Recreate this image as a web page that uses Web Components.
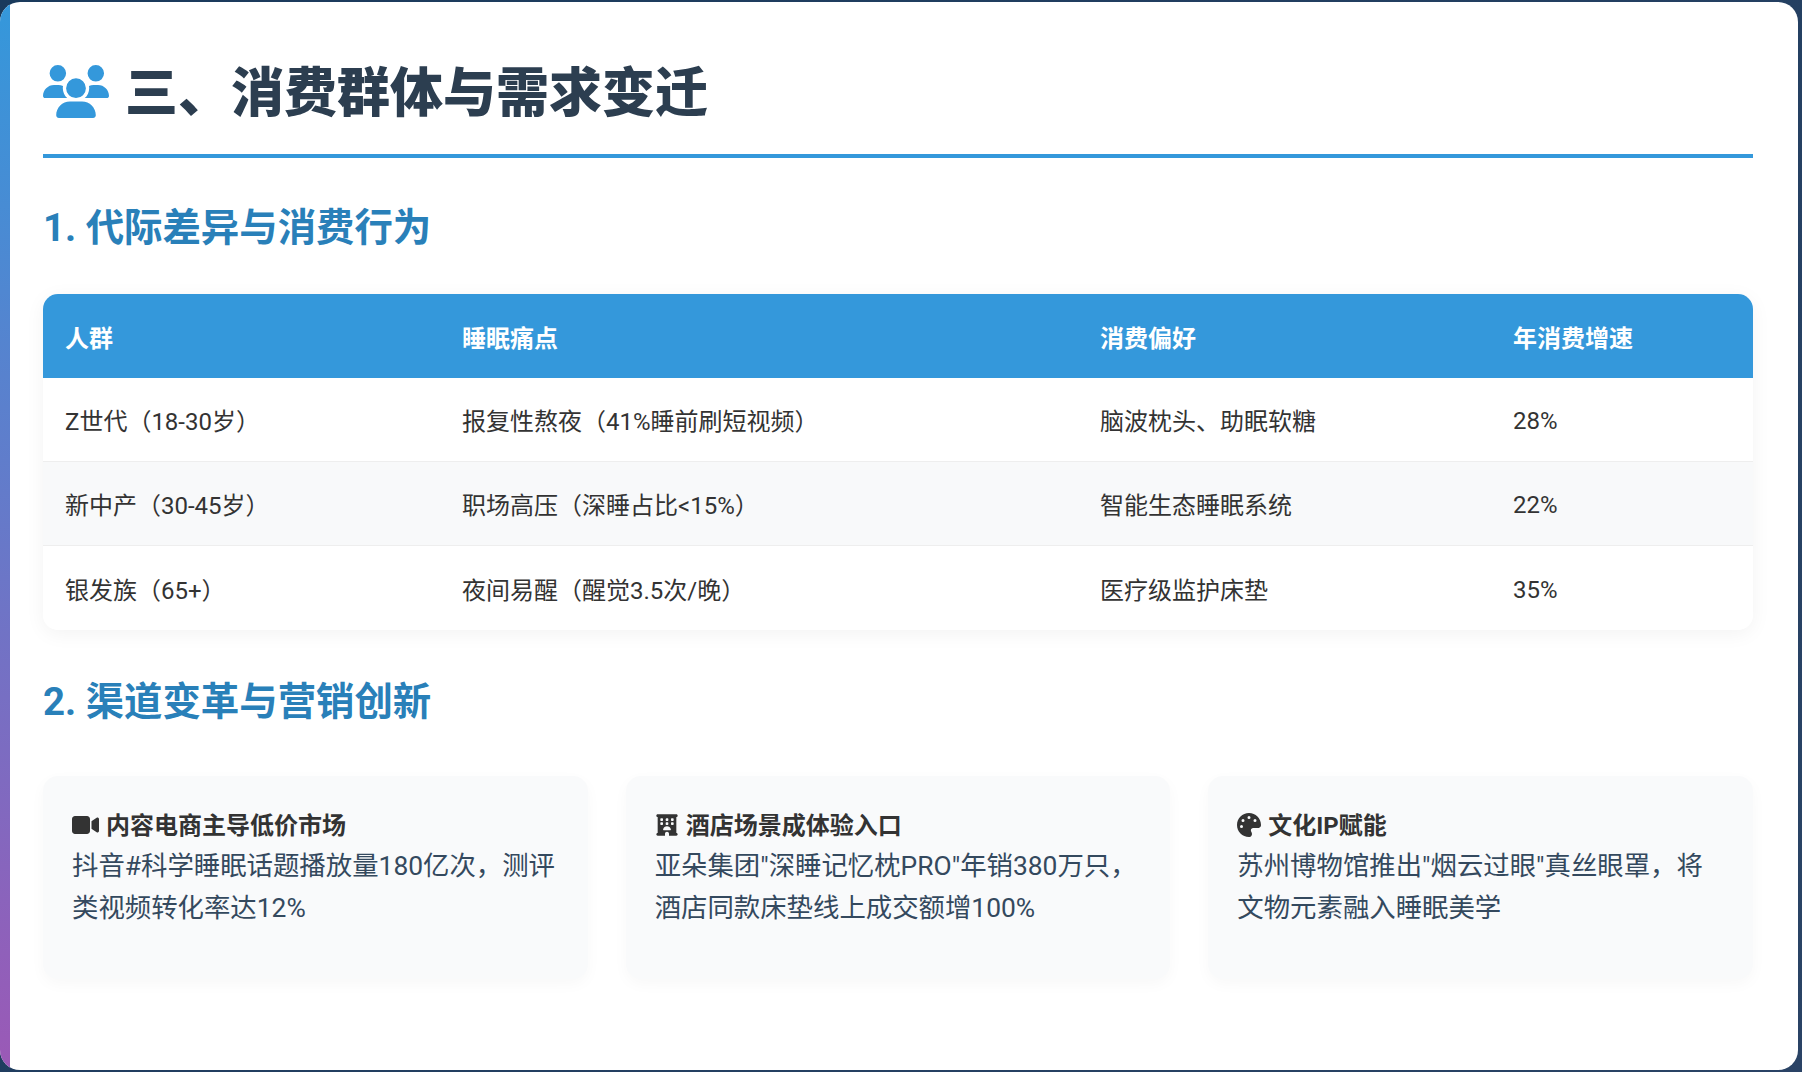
<!DOCTYPE html>
<html lang="zh-CN">
  <head>
    <meta charset="UTF-8" />
    <title>三、消费群体与需求变迁</title>
    <style>
      html, body { margin: 0; height: 100%; }
      body {
        background: linear-gradient(135deg, #1a3a5c, #2a4365);
        font-family: "Roboto", "Noto Sans CJK SC", sans-serif;
      }
    </style>
  </head>
  <body>
    <slide-page>
      <page-title>
        <svg slot="icon" viewBox="0 0 640 512"><path d="M144 0a80 80 0 1 1 0 160A80 80 0 1 1 144 0zM512 0a80 80 0 1 1 0 160A80 80 0 1 1 512 0zM0 298.7C0 239.8 47.8 192 106.7 192h42.7c15.9 0 31 3.5 44.6 9.7c-1.3 7.2-1.9 14.7-1.9 22.3c0 38.2 16.8 72.5 43.3 96c-.2 0-.4 0-.7 0H21.3C9.6 320 0 310.4 0 298.7zM405.3 320c-.2 0-.4 0-.7 0c26.6-23.5 43.3-57.8 43.3-96c0-7.6-.7-15-1.9-22.3c13.6-6.3 28.7-9.7 44.6-9.7h42.7C592.2 192 640 239.8 640 298.7c0 11.8-9.6 21.3-21.3 21.3H405.3zM224 224a96 96 0 1 1 192 0 96 96 0 1 1 -192 0zM128 485.3C128 411.7 187.7 352 261.3 352H378.7C452.3 352 512 411.7 512 485.3c0 14.7-11.9 26.7-26.7 26.7H154.7c-14.7 0-26.7-11.9-26.7-26.7z"/></svg>
        三、消费群体与需求变迁
      </page-title>

      <section-heading>1. 代际差异与消费行为</section-heading>

      <data-table>
        <data-row head><span>人群</span><span>睡眠痛点</span><span>消费偏好</span><span>年消费增速</span></data-row>
        <data-row><span>Z世代（18-30岁）</span><span>报复性熬夜（41%睡前刷短视频）</span><span>脑波枕头、助眠软糖</span><span>28%</span></data-row>
        <data-row even><span>新中产（30-45岁）</span><span>职场高压（深睡占比&lt;15%）</span><span>智能生态睡眠系统</span><span>22%</span></data-row>
        <data-row last><span>银发族（65+）</span><span>夜间易醒（醒觉3.5次/晚）</span><span>医疗级监护床垫</span><span>35%</span></data-row>
      </data-table>

      <section-heading>2. 渠道变革与营销创新</section-heading>

      <card-grid>
        <info-card>
          <svg slot="icon" viewBox="0 0 576 512" width="27" height="24"><path d="M0 128C0 92.7 28.7 64 64 64H320c35.3 0 64 28.7 64 64V384c0 35.3-28.7 64-64 64H64c-35.3 0-64-28.7-64-64V128zM559.1 99.8c10.4 5.6 16.9 16.4 16.9 28.2V384c0 11.8-6.5 22.6-16.9 28.2s-23 5-32.9-1.6l-96-64L416 337.1V320 192 174.9l14.2-9.5 96-64c9.8-6.5 22.4-7.2 32.9-1.6z"/></svg>
          <span slot="title">内容电商主导低价市场</span>
          抖音#科学睡眠话题播放量180亿次，测评类视频转化率达12%
        </info-card>
        <info-card>
          <svg slot="icon" viewBox="-32 -32 576 576" width="24" height="24"><path d="M0 32C0 14.3 14.3 0 32 0H480c17.7 0 32 14.3 32 32s-14.3 32-32 32V448c17.7 0 32 14.3 32 32s-14.3 32-32 32H304V464c0-26.5-21.5-48-48-48s-48 21.5-48 48v48H32c-17.7 0-32-14.3-32-32s14.3-32 32-32V64C14.3 64 0 49.7 0 32zm96 80v32c0 8.8 7.2 16 16 16h32c8.8 0 16-7.2 16-16V112c0-8.8-7.2-16-16-16H112c-8.8 0-16 7.2-16 16zM240 96c-8.8 0-16 7.2-16 16v32c0 8.8 7.2 16 16 16h32c8.8 0 16-7.2 16-16V112c0-8.8-7.2-16-16-16H240c-8.8 0-16 7.2-16 16zm112 16v32c0 8.8 7.2 16 16 16h32c8.8 0 16-7.2 16-16V112c0-8.8-7.2-16-16-16H368c-8.8 0-16 7.2-16 16zM112 192c-8.8 0-16 7.2-16 16v32c0 8.8 7.2 16 16 16h32c8.8 0 16-7.2 16-16V208c0-8.8-7.2-16-16-16H112zm112 16v32c0 8.8 7.2 16 16 16h32c8.8 0 16-7.2 16-16V208c0-8.8-7.2-16-16-16H240c-8.8 0-16 7.2-16 16zm144-16c-8.8 0-16 7.2-16 16v32c0 8.8 7.2 16 16 16h32c8.8 0 16-7.2 16-16V208c0-8.8-7.2-16-16-16H368zM328 384c13.3 0 24.3-10.9 21-23.8c-10.6-41.5-48.2-72.2-93-72.2s-82.5 30.7-93 72.2c-3.3 12.8 7.8 23.8 21 23.8H328z"/></svg>
          <span slot="title">酒店场景成体验入口</span>
          亚朵集团"深睡记忆枕PRO"年销380万只，酒店同款床垫线上成交额增100%
        </info-card>
        <info-card>
          <svg slot="icon" viewBox="0 0 512 512" width="24" height="24"><path d="M512 256c0 .9 0 1.8 0 2.7c-.4 36.5-33.6 61.3-70.1 61.3H344c-26.5 0-48 21.5-48 48c0 3.4 .4 6.7 1 9.9c2.1 10.2 6.5 20 10.8 29.9c6.1 13.8 12.1 27.5 12.1 42c0 31.8-21.6 60.7-53.4 62c-3.5 .1-7 .2-10.6 .2C114.6 512 0 397.4 0 256S114.6 0 256 0S512 114.6 512 256zM128 288a32 32 0 1 0 -64 0 32 32 0 1 0 64 0zm0-96a32 32 0 1 0 0-64 32 32 0 1 0 0 64zM288 96a32 32 0 1 0 -64 0 32 32 0 1 0 64 0zm96 96a32 32 0 1 0 0-64 32 32 0 1 0 0 64z"/></svg>
          <span slot="title">文化IP赋能</span>
          苏州博物馆推出"烟云过眼"真丝眼罩，将文物元素融入睡眠美学
        </info-card>
      </card-grid>
    </slide-page>

    <script>
      // 共通: シャドウルートにテンプレート文字列をセットするだけの基底クラス
      class BaseElement extends HTMLElement {
        constructor(html) {
          super();
          this.attachShadow({ mode: "open" });
          this.shadowRoot.innerHTML = html;
        }
      }

      class SlidePage extends BaseElement {
        constructor() {
          super(`
      <style>
        :host {
          display: block;
          position: relative;
          box-sizing: border-box;
          width: 1798px;
          height: 1068px;
          top: 2px;
          padding: 62px 45px 0 43px;
          background: #fff;
          border-radius: 20px;
          overflow: hidden;
        }
        .bar {
          position: absolute;
          left: 0;
          top: 0;
          bottom: 0;
          width: 10px;
          background: linear-gradient(180deg, #3498db, #9b59b6);
        }
      </style>
      <div class="bar"></div>
      <slot></slot>
    `);
        }
      }

      class PageTitle extends BaseElement {
        constructor() {
          super(`
      <style>
        :host {
          display: flex;
          align-items: center;
          gap: 16px;
          height: 60px;
          padding-bottom: 30px;
          border-bottom: 4px solid #3498db;
          color: #2c3e50;
          font-size: 53px;
          font-weight: 900;
          line-height: 60px;
        }
        ::slotted(svg) {
          width: 66px;
          height: 53px;
          margin-top: -6px;
          fill: #3498db;
          flex: none;
        }
      </style>
      <slot name="icon"></slot>
      <slot></slot>
    `);
        }
      }

      class SectionHeading extends BaseElement {
        constructor() {
          super(`
      <style>
        :host {
          display: block;
          margin: 40px 0 36px;
          color: #2980b9;
          font-size: 38.4px;
          font-weight: 700;
          line-height: 60px;
        }
      </style>
      <slot></slot>
    `);
        }
      }

      class DataTable extends BaseElement {
        constructor() {
          super(`
      <style>
        :host {
          display: block;
          margin-bottom: 42px;
          border-radius: 15px;
          overflow: hidden;
          box-shadow: 0 4px 20px rgba(0, 0, 0, 0.05);
        }
      </style>
      <slot></slot>
    `);
        }
      }

      class DataRow extends BaseElement {
        constructor() {
          super(`
      <style>
        :host {
          display: grid;
          grid-template-columns: 397px 638px 413px 262px;
          align-items: center;
          box-sizing: border-box;
          height: 84px;
          background: #fff;
          border-bottom: 1px solid #eee;
          color: #333;
          font-size: 24px;
        }
        :host([even]) { background: #f8f9fa; }
        :host([last]) { border-bottom: none; }
        :host([head]) {
          background: #3498db;
          border-bottom: none;
          color: #fff;
          font-weight: 700;
        }
        ::slotted(span) { padding-left: 22px; }
        /* 数字だけのセルは CJK のセルより少し上に出るので下げる */
        :host(:not([head])) ::slotted(span:last-child) { padding-top: 3px; }
      </style>
      <slot></slot>
    `);
        }
      }

      class CardGrid extends BaseElement {
        constructor() {
          super(`
      <style>
        :host {
          display: grid;
          grid-template-columns: repeat(3, 1fr);
          gap: 38px;
          margin-top: -16px;
          padding-top: 24px;
        }
      </style>
      <slot></slot>
    `);
        }
      }

      class InfoCard extends BaseElement {
        constructor() {
          super(`
      <style>
        :host {
          display: block;
          padding: 32px 29px 50px;
          background: #f9fafb;
          border-radius: 15px;
          box-shadow: 0 5px 15px rgba(0, 0, 0, 0.03);
          color: #34495e;
          font-size: 26.4px;
          line-height: 41.6px;
        }
        .title {
          display: flex;
          align-items: center;
          gap: 7px;
          height: 38px;
          color: #333;
          font-size: 24px;
          font-weight: 700;
        }
        ::slotted(svg) { margin-top: -4px; fill: #333; flex: none; }
      </style>
      <div class="title"><slot name="icon"></slot><slot name="title"></slot></div>
      <slot></slot>
    `);
        }
      }

      customElements.define("slide-page", SlidePage);
      customElements.define("page-title", PageTitle);
      customElements.define("section-heading", SectionHeading);
      customElements.define("data-table", DataTable);
      customElements.define("data-row", DataRow);
      customElements.define("card-grid", CardGrid);
      customElements.define("info-card", InfoCard);
    </script>
  </body>
</html>
